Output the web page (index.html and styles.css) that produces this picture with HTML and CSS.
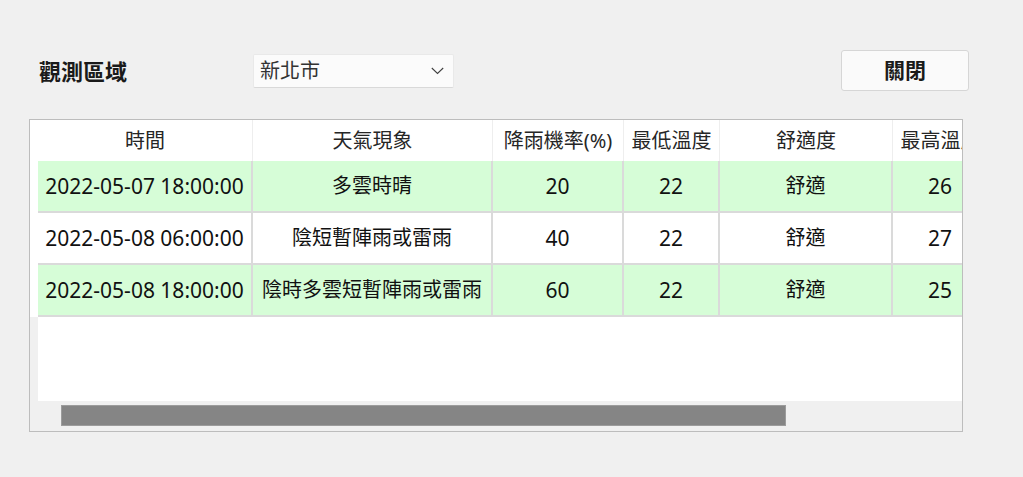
FILE: index.html
```html
<!DOCTYPE html>
<html lang="zh-Hant">
<head>
<meta charset="utf-8">
<title>觀測區域</title>
<link rel="stylesheet" href="styles.css">
</head>
<body>
<div class="top">
  <div class="label">觀測區域</div>
  <div class="combo">
    <span class="combo-text">新北市</span>
    <svg class="chev" width="13" height="8" viewBox="0 0 13 8"><path d="M0.8 1 L6.5 6.5 L12.2 1" fill="none" stroke="#404040" stroke-width="1.1"/></svg>
  </div>
  <button class="btn">關閉</button>
</div>
<div class="panel">
  <div class="grid-area">
    <div class="table">
      <div class="row head">
        <div class="rh"></div>
        <div class="cell">時間</div>
        <div class="cell">天氣現象</div>
        <div class="cell">降雨機率(%)</div>
        <div class="cell">最低溫度</div>
        <div class="cell">舒適度</div>
        <div class="cell">最高溫度</div>
      </div>
      <div class="row alt">
        <div class="rh"></div>
        <div class="cell num">2022-05-07 18:00:00</div>
        <div class="cell">多雲時晴</div>
        <div class="cell num">20</div>
        <div class="cell num">22</div>
        <div class="cell">舒適</div>
        <div class="cell num">26</div>
      </div>
      <div class="row">
        <div class="rh"></div>
        <div class="cell num">2022-05-08 06:00:00</div>
        <div class="cell">陰短暫陣雨或雷雨</div>
        <div class="cell num">40</div>
        <div class="cell num">22</div>
        <div class="cell">舒適</div>
        <div class="cell num">27</div>
      </div>
      <div class="row alt">
        <div class="rh"></div>
        <div class="cell num">2022-05-08 18:00:00</div>
        <div class="cell">陰時多雲短暫陣雨或雷雨</div>
        <div class="cell num">60</div>
        <div class="cell num">22</div>
        <div class="cell">舒適</div>
        <div class="cell num">25</div>
      </div>
    </div>
  </div>
  <div class="hscroll">
    <div class="thumb"></div>
  </div>
</div>
</body>
</html>
```

FILE: styles.css
```css
html, body {
  margin: 0;
  padding: 0;
}
body {
  background: #f0f0f0;
  width: 1023px;
  height: 477px;
  overflow: hidden;
  font-family: "Noto Sans", "Noto Sans CJK TC", sans-serif;
  color: #111;
}
.top {
  display: flex;
  align-items: center;
  height: 41px;
  margin-top: 50px;
  padding-left: 39px;
  padding-right: 54px;
}
.label {
  width: 214px;
  font-size: 22px;
  font-weight: bold;
  color: #1a1a1a;
  line-height: 1;
  position: relative;
  top: 0px;
}
.combo {
  box-sizing: border-box;
  width: 201px;
  height: 34px;
  background: #fbfbfb;
  border: 1px solid #e9e9e9;
  border-bottom-color: #d9d9d9;
  border-radius: 2px;
  display: flex;
  align-items: center;
  padding-left: 6px;
  padding-right: 9px;
}
.combo-text {
  flex: 1;
  font-size: 20px;
  color: #333;
  line-height: 1;
}
.chev {
  display: block;
}
.btn {
  margin-left: auto;
  box-sizing: border-box;
  width: 128px;
  height: 41px;
  background: #fafafa;
  border: 1px solid #d6d6d6;
  border-radius: 3px;
  font-family: "Noto Sans", "Noto Sans CJK TC", sans-serif;
  font-size: 21px;
  font-weight: bold;
  color: #1a1a1a;
  padding: 0;
  line-height: 1;
}
.panel {
  box-sizing: border-box;
  margin-top: 28px;
  margin-left: 29px;
  width: 934px;
  height: 313px;
  border: 1px solid #bdbdbd;
  display: flex;
  flex-direction: column;
}
.grid-area {
  height: 281px;
  overflow: hidden;
  background: linear-gradient(to right, #f0f0f0 8px, #ffffff 8px);
}
.table {
  width: max-content;
}
.row {
  display: grid;
  grid-template-columns: 8px 215px 240px 131px 96px 173px 96px;
  height: 52px;
  font-size: 20px;
}
.row.head {
  height: 41px;
  color: #262626;
  background: #fff;
}
.rh {
  background: #fff;
}
.cell {
  display: flex;
  align-items: center;
  justify-content: center;
  white-space: nowrap;
  border-right: 2px solid #dadada;
  border-bottom: 2px solid #dadada;
  line-height: 1;
}
.row.head .cell {
  border-bottom: none;
  border-right: 1px solid #eeeeee;
}
.row.alt .cell {
  background: #d6fdd7;
}
.cell.num {
  font-size: 21px;
  color: #111;
}
.hscroll {
  flex: 1;
  background: #f0f0f0;
  padding-top: 4px;
  padding-left: 31px;
}
.thumb {
  box-sizing: border-box;
  width: 725px;
  height: 21px;
  background: #858585;
  border: 1px solid #9c9c9c;
}
```
